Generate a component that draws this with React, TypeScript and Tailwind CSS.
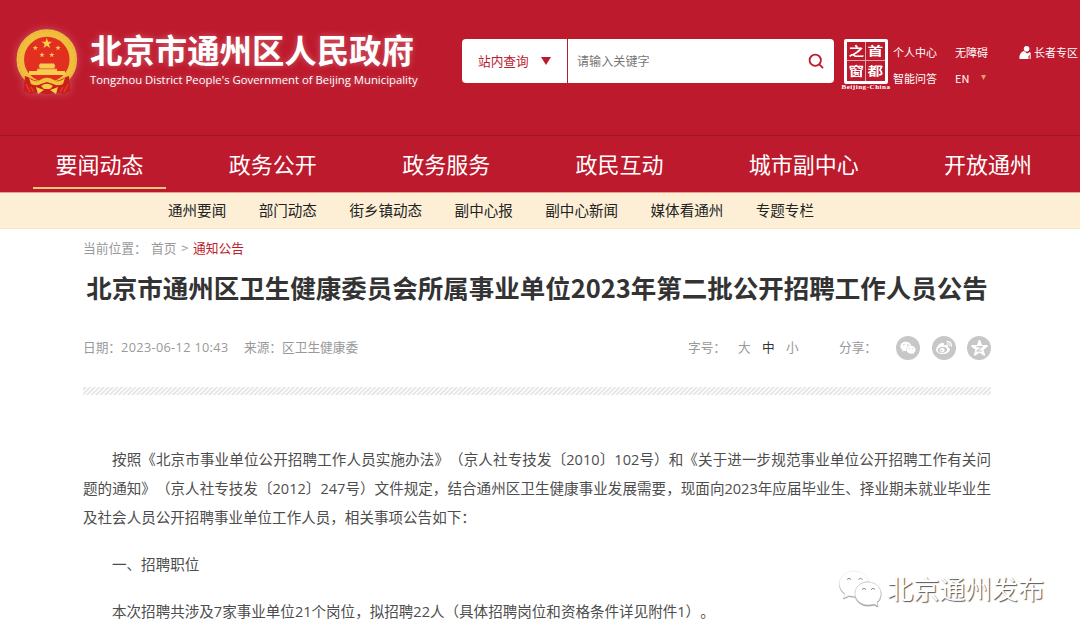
import { FaWeibo, FaWeixin } from "react-icons/fa";

const navItems = ["要闻动态", "政务公开", "政务服务", "政民互动", "城市副中心", "开放通州"];

const subNavItems = ["通州要闻", "部门动态", "街乡镇动态", "副中心报", "副中心新闻", "媒体看通州", "专题专栏"];

const star = "M0 -5L1.2 -1.6H4.8L1.9 .6L3 4.1L0 2L-3 4.1L-1.9 .6L-4.8 -1.6H-1.2Z";

function Emblem() {
  return (
    <svg className="size-[70px] shrink-0 drop-shadow-[0_0_4px_#ffffff40]" viewBox="0 0 70 70" fill="none">
      <circle cx="34.800" cy="30.500" r="26.500" fill="#e22f20" stroke="#f0be3c" strokeWidth="7.5" />
      <circle cx="34.800" cy="30.500" r="28.500" stroke="#d99d2b" strokeWidth="1.500" strokeDasharray="3 2" opacity=".3" />
      <path d={star} fill="#f8cf45" transform="translate(34.8 14.5) scale(1.1)" />
      <path d={star} fill="#f8cf45" transform="translate(23.3 19) scale(.55)" />
      <path d={star} fill="#f8cf45" transform="translate(46 19) scale(.55)" />
      <path d={star} fill="#f8cf45" transform="translate(30 26) scale(.55)" />
      <path d={star} fill="#f8cf45" transform="translate(39.8 26) scale(.55)" />
      <path d="M28 34.500H42L43.500 37.500H42.500V39.500H45V42H53V46H17V42H25V39.500H27.500V37.500H26.500Z" fill="#f6cd50" />
      <path d="M25 39.800H45" stroke="#df2b20" strokeWidth=".6" />
      <path
        d="M13 47C17 48 20 51 26 52L35 49L44 52C50 51 53 48 57 47L58.500 62L52 65L44 63L38 65H32L26 63L18 65L11.500 62Z"
        fill="#c91f1b"
      />
      <path d="M17 49Q21 53 26 52L31 49.500Q35 48 39 49.500L44 52Q49 53 53 49L51 55Q46 57.500 41 55L35 53L29 55Q24 57.500 19 55Z" fill="#f2c33a" />
      <path d="M29 57Q35 52.500 41 57L38 60H32Z" fill="#f5cc45" />
      <path d="M24 58L32 61L26 65ZM46 58L38 61L44 65Z" fill="#f5cc45" />
      <path d="M14 55L18 63M56 55L52 63M19 58L22 63M51 58L48 63" stroke="#e5402b" strokeWidth="1.3" />
    </svg>
  );
}

function SealLogo() {
  return (
    <div className="flex w-[52px] shrink-0 flex-col items-center">
      <div className="grid size-[44.5px] grid-cols-2 grid-rows-2 rounded-[2px] border-[3px] border-white font-['Noto_Sans_CJK_SC',sans-serif] text-[12.5px] font-bold leading-none text-white">
        <span className="flex items-center justify-center border-r border-b border-white/60">
          <span className="scale-x-[1.25]">之</span>
        </span>
        <span className="flex items-center justify-center border-b border-white/60">
          <span className="scale-x-[1.25]">首</span>
        </span>
        <span className="flex items-center justify-center border-r border-white/60">
          <span className="scale-x-[1.25]">窗</span>
        </span>
        <span className="flex items-center justify-center">
          <span className="scale-x-[1.25]">都</span>
        </span>
      </div>
      <span className="-mt-px text-nowrap font-['Liberation_Serif',serif] text-[7px] font-bold leading-[8px] tracking-[0.55px] text-white">
        Beijing-China
      </span>
    </div>
  );
}

function SearchBox() {
  return (
    <div className="flex h-[43.500px] w-[372px] shrink-0 items-center rounded-[4px] bg-white text-[12.7px]">
      <button
        type="button"
        className="flex h-full w-[106px] items-center gap-3 border-r border-[#bd1a2d] pl-4 text-[#bd1a2d]"
      >
        <span className="-mt-px">站内查询</span>
        <svg className="h-2 w-2.5" viewBox="0 0 10 8" fill="#bd1a2d">
          <path d="M0 0H10L5 8Z" />
        </svg>
      </button>
      <span className="flex-1 pl-[9px] text-[12.1px] text-[#777]">请输入关键字</span>
      <svg className="mr-[10px] size-[16px]" viewBox="0 0 17 17" fill="none" stroke="#bd1a2d" strokeWidth="1.9">
        <circle cx="7.7" cy="7.7" r="6" />
        <path d="M12 12L16 16" />
      </svg>
    </div>
  );
}

function ElderIcon() {
  return (
    <svg className="size-[13px]" viewBox="0 0 13 13" fill="white">
      <circle cx="7.6" cy="2.8" r="2.8" />
      <path d="M.5 13C0 9 2 5.500 5 5L8 7.500L11 6L12 8L9.500 10V13Z" />
      <path d="M11.200 8.500V13" stroke="white" strokeWidth="1" />
    </svg>
  );
}

function Header() {
  return (
    <header className="flex h-[135px] items-start bg-[#bd1a2d]">
      <div className="flex pt-[29px] pl-3">
        <Emblem />
        <div className="ml-2 flex w-[330px] flex-col text-white [text-shadow:0_0_6px_#ffffff50]">
          <h1 className="-mt-0.5 text-nowrap text-[32.4px] font-bold leading-[44px]">北京市通州区人民政府</h1>
          <p className="mt-px text-nowrap font-['Open_Sans',sans-serif] text-[11.34px] font-medium leading-4">
            Tongzhou District People's Government of Beijing Municipality
          </p>
        </div>
      </div>
      <div className="flex pt-[39px] pl-[42px]">
        <SearchBox />
        <div className="ml-[6px]">
          <SealLogo />
        </div>
        <div className="ml-[1px] grid grid-cols-[62px_64px_60px] gap-y-[3px] pt-[3px] text-[11px] leading-5 text-nowrap text-white">
          <span>个人中心</span>
          <span>无障碍</span>
          <span className="flex h-5 items-center gap-[2px]">
            <ElderIcon />
            长者专区
          </span>
          <span>智能问答</span>
          <span className="flex h-5 items-center gap-3">
            EN
            <svg className="h-[5px] w-[5px]" viewBox="0 0 5 5" fill="#d9a566">
              <path d="M0 0H5L2.500 5Z" />
            </svg>
          </span>
        </div>
      </div>
    </header>
  );
}

function ShareIcon({ children }: { children: React.ReactNode }) {
  return (
    <span className="flex size-6 items-center justify-center rounded-full bg-[#c7c7c7] text-white">{children}</span>
  );
}

function MetaRow() {
  return (
    <div className="flex h-6 items-center text-[12.7px] text-[#999]">
      <span className="-mt-0.5 w-[161px] text-nowrap leading-5">
        日期：<span className="font-['Open_Sans',sans-serif] text-[12.7px] tracking-[0.35px]">2023-06-12 10:43</span>
      </span>
      <span className="-mt-0.5 text-nowrap leading-5">来源：区卫生健康委</span>
      <div className="ml-auto flex items-center leading-5">
        <span className="-mt-0.5 w-[50px]">字号：</span>
        <span className="-mt-0.5 w-6">大</span>
        <span className="-mt-0.5 w-6 text-[#333]">中</span>
        <span className="-mt-0.5 w-[53px]">小</span>
        <span className="-mt-0.5 w-[57px]">分享：</span>
        <div className="flex gap-[11.5px]">
          <ShareIcon>
            <FaWeixin size={16} />
          </ShareIcon>
          <ShareIcon>
            <FaWeibo size={16} />
          </ShareIcon>
          <ShareIcon>
            <svg className="size-[17px]" viewBox="-5.500 -5.500 11 11" fill="white">
              <path d={star} stroke="white" strokeWidth="1.2" strokeLinejoin="round" />
              <path d="M-2 -1.200H1.600L-1.500 1.600H1.800" fill="none" stroke="#c7c7c7" strokeWidth=".7" />
            </svg>
          </ShareIcon>
        </div>
      </div>
    </div>
  );
}

function Article() {
  return (
    <article className="pt-[50px] font-['Open_Sans','Noto_Sans_CJK_SC',sans-serif] text-[14.55px] leading-[29.1px] text-nowrap text-[#4d4d4d] [text-spacing-trim:space-all]">
      <p className="pl-[29px] [text-align-last:justify]">
        按照《北京市事业单位公开招聘工作人员实施办法》（京人社专技发〔2010〕102号）和《关于进一步规范事业单位公开招聘工作有关问
      </p>
      <p className="[text-align-last:justify]">
        题的通知》（京人社专技发〔2012〕247号）文件规定，结合通州区卫生健康事业发展需要，现面向2023年应届毕业生、择业期未就业毕业生
      </p>
      <p>及社会人员公开招聘事业单位工作人员，相关事项公告如下：</p>
      <p className="mt-[18px] pl-[29px]">一、招聘职位</p>
      <p className="mt-[18px] pl-[29px]">本次招聘共涉及7家事业单位21个岗位，拟招聘22人（具体招聘岗位和资格条件详见附件1）。</p>
    </article>
  );
}

function Watermark() {
  return (
    <div className="absolute top-[568px] left-[838px] flex items-center gap-[5px] text-white">
      <svg className="h-[38px] w-[44px] drop-shadow-[0.5px_1px_0.5px_#999]" viewBox="0 0 44 38" fill="white">
        <path
          d="M16 2C8 2 1.500 7.500 1.500 14.500C1.500 18.500 3.500 22 7 24.500L5.500 29L11 26.500Q14 27.500 18 27C16 19 23 12 31 12.500C29 6 23 2 16 2Z"
          stroke="#eee"
          strokeWidth=".7"
        />
        <path
          d="M30 13C22.500 13 17 18 17 24.500C17 31 23 36 30 36Q33 36 36 35L40 37L39 33C41.500 31 43 28 43 24.500C43 18 37 13 30 13Z"
          stroke="#ccc"
          strokeWidth=".8"
        />
        <path
          d="M9 10.500Q11 8 13 10.500M20.500 10.500Q22.500 8 24.500 10.500M24 20.500Q26 18 28 20.500M33 20.500Q35 18 37 20.500"
          fill="none"
          stroke="#888"
          strokeWidth="1"
        />
      </svg>
      <span className="text-[26.2px] leading-[40px] text-nowrap [text-shadow:1px_1px_1px_#555]">北京通州发布</span>
    </div>
  );
}

export default function App() {
  return (
    <div className="relative h-[637px] w-[1080px] overflow-hidden bg-white font-['Noto_Sans_CJK_SC',sans-serif]">
      <Header />
      <nav className="flex h-[57px] gap-[40.3px] border-t border-[#981824] bg-[#bd1a2d] pl-[33px] text-[22px] text-white">
        {navItems.map((item, index) => (
          <a
            key={item}
            href="#"
            className={`h-[53px] shrink-0 px-[22.5px] leading-[55px] text-nowrap ${
              index === 0 ? "border-b-2 border-[#edc77c]" : ""
            }`}
          >
            {item}
          </a>
        ))}
      </nav>
      <div className="flex h-[37px] gap-[32.5px] border-t border-b border-t-[#e9a08f] border-b-[#f7e6c4] bg-[#fcefd6] pl-[168px] text-[14.55px] leading-[34px] text-[#222]">
        {subNavItems.map((item) => (
          <a key={item} href="#" className="text-nowrap">
            {item}
          </a>
        ))}
      </div>
      <main className="mx-[83px] w-[908px]">
        <div className="flex h-[38px] items-center text-[12.75px] text-[#999]">
          <span className="w-[68px] text-nowrap">当前位置：</span>
          <span>首页</span>
          <span className="w-[16.500px] text-center">&gt;</span>
          <span className="text-[#bd1a2d]">通知公告</span>
        </div>
        <h2 className="text-center text-[25.5px] font-bold leading-[39px] text-nowrap text-[#333]">
          北京市通州区卫生健康委员会所属事业单位2023年第二批公开招聘工作人员公告
        </h2>
        <div className="mt-[30px]">
          <MetaRow />
        </div>
        <div className="mt-[27px] h-2 bg-[repeating-linear-gradient(135deg,#fafafa_0_1px,#dedede_2px,#fafafa_3.200px)]" />
        <Article />
      </main>
      <Watermark />
    </div>
  );
}
